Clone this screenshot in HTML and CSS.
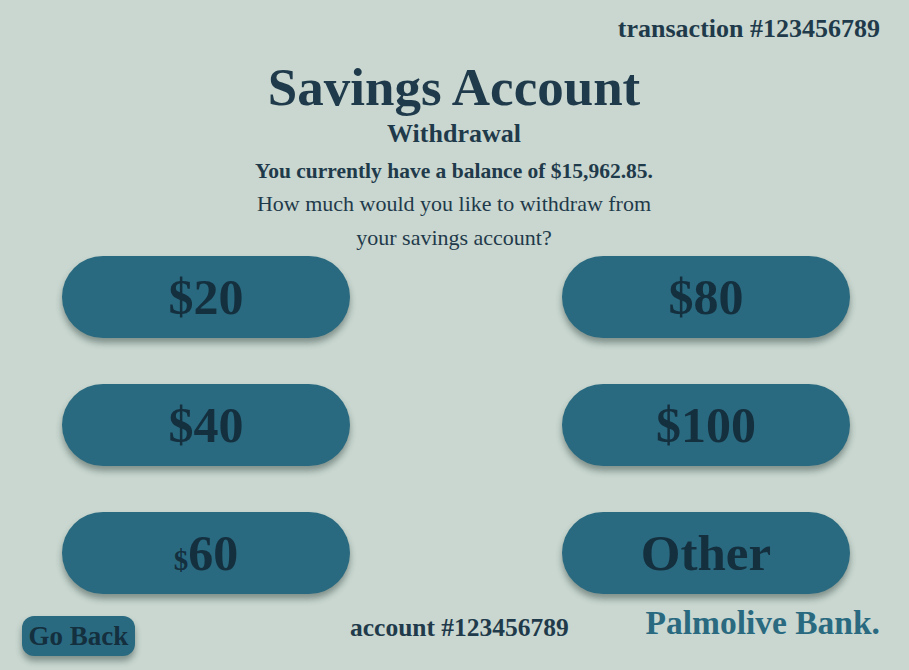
FILE: index.html
```html
<!DOCTYPE html>
<html>
<head>
<meta charset="utf-8">
<link rel="stylesheet" href="styles.css">
</head>
<body>
<div class="screen">
  <div class="topbar"><span class="txn">transaction #123456789</span></div>
  <header class="head">
    <h1 class="title">Savings Account</h1>
    <h2 class="sub">Withdrawal</h2>
    <p class="balance">You currently have a balance of $15,962.85.</p>
    <p class="ask">How much would you like to withdraw from<br>your savings account?</p>
  </header>
  <main class="grid">
    <button class="amt">$20</button>
    <button class="amt">$80</button>
    <button class="amt">$40</button>
    <button class="amt">$100</button>
    <button class="amt"><span class="small">$</span>60</button>
    <button class="amt other">Other</button>
  </main>
  <footer class="foot">
    <button class="back">Go Back</button>
    <span class="acct">account #123456789</span>
    <span class="brand">Palmolive Bank.</span>
  </footer>
</div>
</body>
</html>
```
FILE: styles.css
```css
html, body {
  margin: 0;
  padding: 0;
  background: #c9d7d0;
}
.screen {
  width: 909px;
  height: 670px;
  box-sizing: border-box;
  padding: 14px 29px 0 22px;
  font-family: "Liberation Serif", "DejaVu Serif", serif;
  color: #1f3a4a;
  display: flex;
  flex-direction: column;
}
.topbar {
  display: flex;
  justify-content: flex-end;
}
.txn {
  font-weight: bold;
  font-size: 26px;
  line-height: 30px;
}
.head {
  text-align: center;
  margin-top: 15px;
  padding-left: 6px;
}
.title {
  margin: 0;
  font-size: 53px;
  line-height: 56px;
  font-weight: bold;
}
.sub {
  margin: 6px 0 0;
  font-size: 26px;
  line-height: 26px;
  font-weight: bold;
}
.balance {
  margin: 11px 0 0;
  font-size: 21.5px;
  line-height: 26px;
  font-weight: bold;
}
.ask {
  margin: 3px 0 0;
  font-size: 22px;
  line-height: 34px;
}
.grid {
  display: grid;
  grid-template-columns: 288px 288px;
  justify-content: space-between;
  row-gap: 46px;
  padding: 0 30px 0 40px;
  margin-top: 1px;
}
.amt {
  height: 82px;
  border: none;
  border-radius: 41px;
  background: #2a6a80;
  color: #142f3e;
  font-family: inherit;
  font-weight: bold;
  font-size: 50px;
  box-shadow: 0 5px 6px rgba(40, 60, 55, 0.45);
  padding: 0;
}
.other {
  font-size: 51px;
}
.small {
  font-size: 29px;
}
.foot {
  display: flex;
  align-items: flex-start;
  margin-top: 22px;
}
.back {
  width: 113px;
  height: 40px;
  border: none;
  border-radius: 12px;
  background: #2a6a80;
  color: #142f3e;
  font-family: inherit;
  font-weight: bold;
  font-size: 27px;
  padding: 0;
  box-shadow: 0 5px 6px rgba(40, 60, 55, 0.45);
}
.acct {
  font-weight: bold;
  font-size: 25.5px;
  line-height: 30px;
  margin-left: 215px;
  margin-top: -3px;
}
.brand {
  margin-left: auto;
  font-weight: bold;
  font-size: 33.5px;
  line-height: 36px;
  margin-top: -11px;
  color: #2a6a80;
}
```
